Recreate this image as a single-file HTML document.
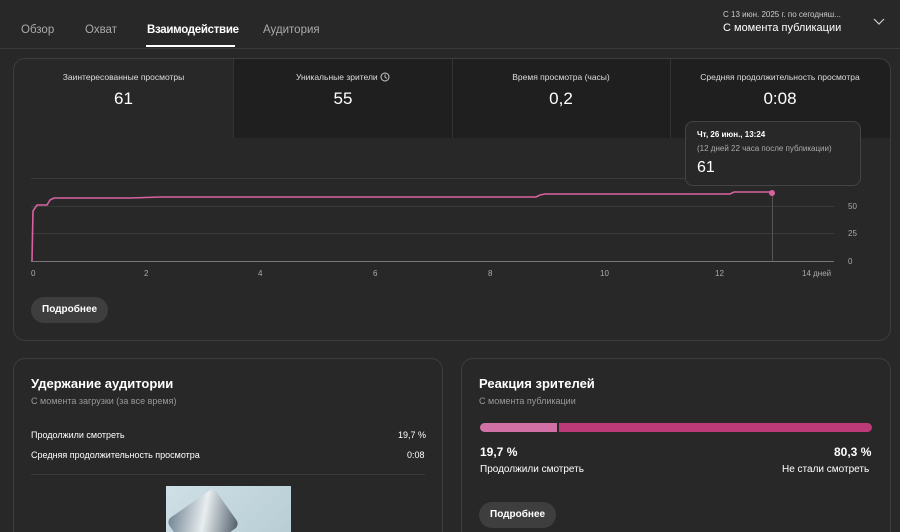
<!DOCTYPE html>
<html style="overflow:hidden;height:532px"><head><meta charset="utf-8"><style>
*{box-sizing:border-box;margin:0;padding:0}
body{width:900px;height:532px;background:#282828;font-family:"Liberation Sans",sans-serif;color:#fff;position:relative;overflow:hidden}
.a{position:absolute}
.tab{position:absolute;top:24px;font-size:11.5px;color:#aaa}
.card{position:absolute;border:1px solid #3d3d3d;border-radius:12px;background:#282828}
.m{position:absolute;top:60px;height:78px;text-align:center}
.ml{font-size:8.5px;color:#ddd;margin-top:12px}
.mv{font-size:17px;margin-top:7px}
.btn{position:absolute;background:#3e3e3e;border-radius:14px;font-size:10px;font-weight:bold;height:26px;line-height:26px;padding:0 11px}
.yl{position:absolute;left:848px;font-size:8px;color:#aaa}
.xl{position:absolute;top:269px;font-size:8px;color:#aaa}
</style></head><body>
<div class="tab" style="left:21px">Обзор</div>
<div class="tab" style="left:85px">Охват</div>
<div class="tab" style="left:147px;color:#fff;font-weight:bold;letter-spacing:-0.3px">Взаимодействие</div>
<div class="a" style="left:146px;top:45px;width:89px;height:2px;background:#fff"></div>
<div class="tab" style="left:263px">Аудитория</div>
<div class="a" style="left:723px;top:10px;font-size:8px;color:#ccc">С 13 июн. 2025 г. по сегодняш...</div>
<div class="a" style="left:723px;top:22px;font-size:11px">С момента публикации</div>
<svg class="a" style="left:873px;top:17px" width="12" height="10"><path d="M1 2l5 5 5-5" stroke="#ccc" fill="none" stroke-width="1.2"/></svg>
<div class="a" style="left:0;top:48px;width:900px;height:1px;background:#3a3a3a"></div>

<div class="card" style="left:13px;top:58px;width:878px;height:283px"></div>
<div class="a" style="left:234px;top:59px;width:656px;height:79px;background:#1f1f1f;border-top-right-radius:11px"></div>
<div class="a" style="left:452px;top:59px;width:1px;height:79px;background:#333"></div>
<div class="a" style="left:670px;top:59px;width:1px;height:79px;background:#333"></div>
<div class="a" style="left:233px;top:59px;width:1px;height:79px;background:#333"></div>
<div class="m" style="left:14px;width:219px"><div class="ml">Заинтересованные просмотры</div><div class="mv">61</div></div>
<div class="m" style="left:234px;width:218px"><div class="ml">Уникальные зрители <svg width="10" height="10" style="vertical-align:-2px"><circle cx="5" cy="5" r="4" stroke="#ccc" fill="none"/><path d="M5 2.5V5l1.8 1.5" stroke="#ccc" fill="none" stroke-width="0.9"/></svg></div><div class="mv">55</div></div>
<div class="m" style="left:452px;width:218px"><div class="ml">Время просмотра (часы)</div><div class="mv">0,2</div></div>
<div class="m" style="left:670px;width:220px"><div class="ml">Средняя продолжительность просмотра</div><div class="mv">0:08</div></div>

<svg class="a" style="left:0;top:0" width="900" height="300">
<g stroke="#3a3a3a" stroke-width="1"><line x1="31" y1="178.5" x2="834" y2="178.5"/><line x1="31" y1="206.5" x2="834" y2="206.5"/><line x1="31" y1="233.5" x2="834" y2="233.5"/></g>
<line x1="31" y1="261.5" x2="834" y2="261.5" stroke="#777"/>
<line x1="772.5" y1="194" x2="772.5" y2="261" stroke="#555"/>
<polyline fill="none" stroke="#d8629f" stroke-width="1.6" points="32,261 33,211 37,205 47,205 50,200 54,198 130,198 160,197 536,197 540,195 545,194 730,194 734,192 772,192"/>
<circle cx="772" cy="193" r="3" fill="#d8629f"/>
</svg>
<div class="yl" style="top:202px">50</div><div class="yl" style="top:229px">25</div><div class="yl" style="top:257px">0</div>
<div class="xl" style="left:31px">0</div><div class="xl" style="left:144px">2</div><div class="xl" style="left:258px">4</div><div class="xl" style="left:373px">6</div><div class="xl" style="left:488px">8</div><div class="xl" style="left:600px">10</div><div class="xl" style="left:715px">12</div><div class="xl" style="left:802px">14 дней</div>

<div class="a" style="left:685px;top:121px;width:176px;height:65px;background:#282828;border:1px solid #444;border-radius:8px;padding:8px 11px">
<div style="font-size:8px;font-weight:bold">Чт, 26 июн., 13:24</div>
<div style="font-size:8px;color:#aaa;margin-top:5px">(12 дней 22 часа после публикации)</div>
<div style="font-size:16px;margin-top:6px">61</div></div>

<div class="btn" style="left:31px;top:297px">Подробнее</div>

<div class="card" style="left:13px;top:358px;width:430px;height:200px"></div>
<div class="a" style="left:31px;top:376px;font-size:13px;font-weight:bold">Удержание аудитории</div>
<div class="a" style="left:31px;top:396px;font-size:9px;color:#999">С момента загрузки (за все время)</div>
<div class="a" style="left:31px;top:430px;font-size:9px">Продолжили смотреть</div>
<div class="a" style="left:398px;top:430px;font-size:9px">19,7 %</div>
<div class="a" style="left:31px;top:450px;font-size:9px">Средняя продолжительность просмотра</div>
<div class="a" style="left:407px;top:450px;font-size:9px">0:08</div>
<div class="a" style="left:31px;top:474px;width:394px;height:1px;background:#3a3a3a"></div>
<div class="a" style="left:166px;top:486px;width:125px;height:50px;background:linear-gradient(135deg,#cfe0e6,#b8cdd5);overflow:hidden">
<div class="a" style="left:8px;top:14px;width:58px;height:46px;background:linear-gradient(135deg,#6c7f8f,#e8eef0,#4a5865);transform:rotate(-35deg);border-radius:6px"></div></div>

<div class="card" style="left:461px;top:358px;width:430px;height:200px"></div>
<div class="a" style="left:479px;top:376px;font-size:13px;font-weight:bold">Реакция зрителей</div>
<div class="a" style="left:479px;top:396px;font-size:9px;color:#999">С момента публикации</div>
<div class="a" style="left:480px;top:423px;width:77px;height:9px;background:#d070a4;border-radius:5px 0 0 5px"></div>
<div class="a" style="left:559px;top:423px;width:313px;height:9px;background:#bd3a78;border-radius:0 5px 5px 0"></div>
<div class="a" style="left:480px;top:445px;font-size:12px;font-weight:bold">19,7 %</div>
<div class="a" style="left:834px;top:445px;font-size:12px;font-weight:bold">80,3 %</div>
<div class="a" style="left:480px;top:464px;font-size:10px">Продолжили смотреть</div>
<div class="a" style="left:782px;top:464px;font-size:10px">Не стали смотреть</div>
<div class="btn" style="left:479px;top:502px">Подробнее</div>
</body></html>
